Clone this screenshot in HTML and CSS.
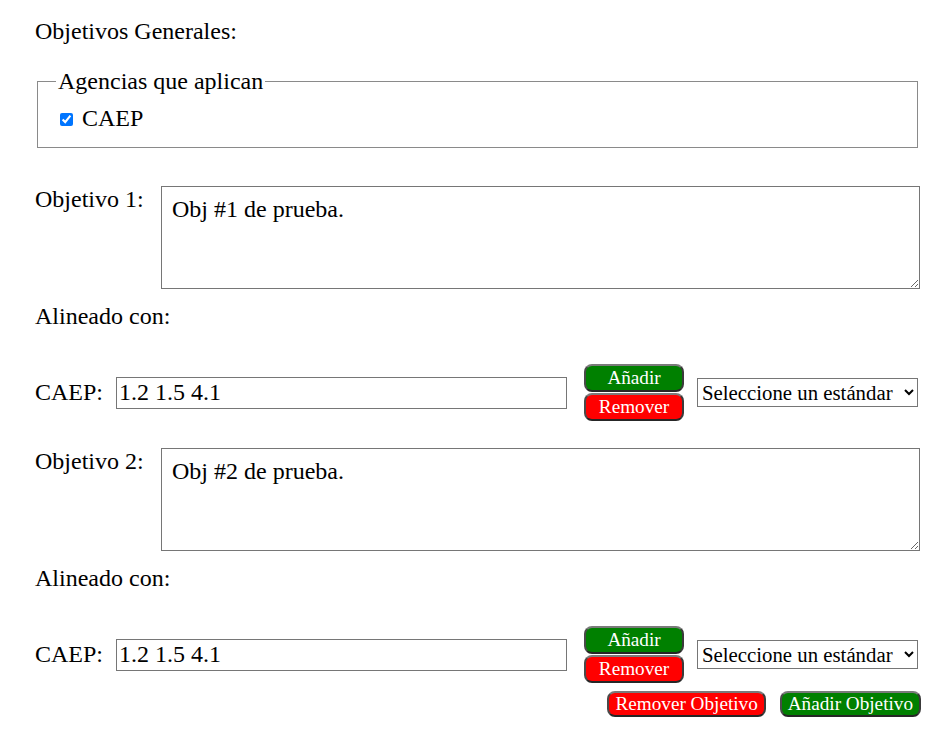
FILE: index.html
```html
<!DOCTYPE html>
<html lang="es">
<head>
<meta charset="utf-8">
<title>Objetivos Generales</title>
<link rel="stylesheet" href="styles.css">
</head>
<body>
<div class="page">
  <p class="title">Objetivos Generales:</p>
  <fieldset class="agencies">
    <legend>Agencias que aplican</legend>
    <label class="agency"><input type="checkbox" checked> CAEP</label>
  </fieldset>

  <div class="objective first">
    <div class="obj-row">
      <label class="obj-label">Objetivo 1:</label>
      <textarea class="obj-text">Obj #1 de prueba.</textarea>
    </div>
    <p class="aligned">Alineado con:</p>
    <div class="std-row">
      <label class="std-label">CAEP:</label>
      <input class="std-input" type="text" value="1.2 1.5 4.1">
      <div class="std-buttons">
        <button class="btn btn-green btn-small">Añadir</button>
        <button class="btn btn-red btn-small">Remover</button>
      </div>
      <select class="std-select"><option>Seleccione un estándar</option></select>
    </div>
  </div>

  <div class="objective">
    <div class="obj-row">
      <label class="obj-label">Objetivo 2:</label>
      <textarea class="obj-text">Obj #2 de prueba.</textarea>
    </div>
    <p class="aligned">Alineado con:</p>
    <div class="std-row">
      <label class="std-label">CAEP:</label>
      <input class="std-input" type="text" value="1.2 1.5 4.1">
      <div class="std-buttons">
        <button class="btn btn-green btn-small">Añadir</button>
        <button class="btn btn-red btn-small">Remover</button>
      </div>
      <select class="std-select"><option>Seleccione un estándar</option></select>
    </div>
  </div>

  <div class="actions">
    <button class="btn btn-red btn-wide">Remover Objetivo</button>
    <button class="btn btn-green btn-wide">Añadir Objetivo</button>
  </div>
</div>
</body>
</html>
```

FILE: styles.css
```css
html, body {
  margin: 0;
  background: #ffffff;
}

body {
  font-family: "Liberation Serif", "Times New Roman", serif;
  font-size: 24px;
  color: #000000;
}

.page {
  padding: 18px 29px 0 35px;
}

.title {
  margin: 0 0 23px 0;
}

.agencies {
  margin: 0 2px;
  padding: 10px 18px 15px;
  border: 1px solid #8a8a8a;
}

.agencies legend {
  padding: 0 2px;
}

.agency input {
  margin: 3px 3px 3px 4px;
  width: 13px;
  height: 13px;
  vertical-align: 0;
}

.objective {
  margin-bottom: 27px;
}

.objective.first {
  margin-top: 38px;
}

.obj-row {
  display: flex;
  align-items: flex-start;
}

.obj-label {
  width: 126px;
  flex: none;
}

.obj-text {
  flex: 1;
  box-sizing: border-box;
  height: 103px;
  margin: 0;
  padding: 9px 10px;
  border: 1px solid #767676;
  font-family: "Liberation Serif", "Times New Roman", serif;
  font-size: 24px;
  color: #000000;
}

.aligned {
  margin: 14px 0 0 0;
}

.std-row {
  display: flex;
  align-items: center;
  margin-top: 34px;
}

.std-label {
  margin-right: 13px;
}

.std-input {
  box-sizing: border-box;
  width: 451px;
  height: 32px;
  margin: 0 17px 0 0;
  padding: 1px 2px;
  border: 1px solid #767676;
  font-family: "Liberation Serif", "Times New Roman", serif;
  font-size: 24px;
  color: #000000;
}

.std-buttons {
  display: flex;
  flex-direction: column;
  gap: 1px;
  margin-right: 13px;
}

.std-select {
  box-sizing: border-box;
  width: 221px;
  height: 29px;
  margin: 0;
  padding: 0;
  border: 1px solid #767676;
  border-radius: 0;
  background: #ffffff;
  font-family: "Liberation Serif", "Times New Roman", serif;
  font-size: 20.8px;
  color: #000000;
}

.btn {
  font-family: "Liberation Serif", "Times New Roman", serif;
  font-size: 19.2px;
  line-height: 22px;
  color: #ffffff;
  border-width: 2px;
  border-style: solid;
  border-color: #7a7a7a #3a3a3a #262626 #4a4a4a;
  border-radius: 8px;
  cursor: pointer;
}

.btn-green {
  background: #008000;
}

.btn-red {
  background: #ff0000;
}

.btn-small {
  box-sizing: border-box;
  width: 100px;
  height: 28px;
  padding: 1px 6px;
}

.btn-wide {
  box-sizing: border-box;
  height: 26px;
  padding: 0 6px;
}

.actions {
  display: flex;
  justify-content: flex-end;
  gap: 14px;
  margin-top: -19px;
  margin-right: -1px;
}
```
